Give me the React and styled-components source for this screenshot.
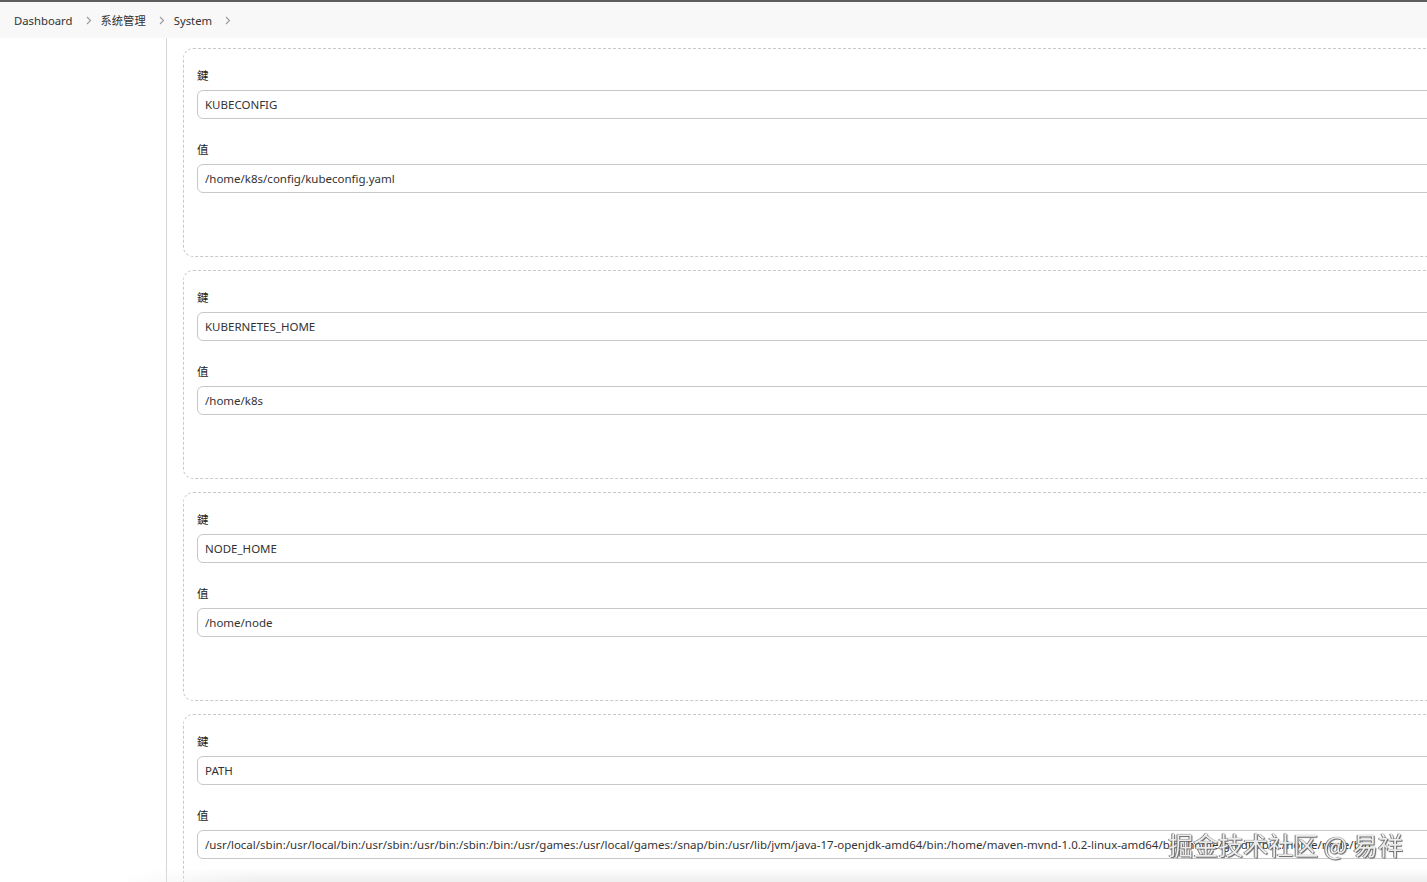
import React from 'react';
import styled, { createGlobalStyle } from 'styled-components';

const envVars = [
  { key: 'KUBECONFIG', value: '/home/k8s/config/kubeconfig.yaml' },
  { key: 'KUBERNETES_HOME', value: '/home/k8s' },
  { key: 'NODE_HOME', value: '/home/node' },
  {
    key: 'PATH',
    value:
      '/usr/local/sbin:/usr/local/bin:/usr/sbin:/usr/bin:/sbin:/bin:/usr/games:/usr/local/games:/snap/bin:/usr/lib/jvm/java-17-openjdk-amd64/bin:/home/maven-mvnd-1.0.2-linux-amd64/bin:/home/gradle/bin:/home/node/bin',
  },
];

const crumbs = ['Dashboard', '系统管理', 'System'];

const Chevron = () => (
  <svg width="6" height="9" viewBox="0 0 6 9" fill="none">
    <path d="M1 1l3.5 3.5L1 8" stroke="#9a9a9a" strokeWidth="1.1" />
  </svg>
);

const App = () => {
  return (
    <>
      <GlobalStyle />
      <TopStrip />
      <Breadcrumbs>
        {crumbs.map(c => (
          <Crumb key={c}>
            <CrumbLink>{c}</CrumbLink>
            <Chevron />
          </Crumb>
        ))}
      </Breadcrumbs>
      <Layout>
        <Sidebar />
        <Main>
          {envVars.map(v => (
            <Card key={v.key}>
              <Field>
                <Label>鍵</Label>
                <Input readOnly value={v.key} />
              </Field>
              <Field>
                <Label>值</Label>
                <Input readOnly value={v.value} />
              </Field>
            </Card>
          ))}
        </Main>
      </Layout>
      <BottomShade />
      <Watermark>掘金技术社区 @ 易祥</Watermark>
    </>
  );
};

export default App;

const GlobalStyle = createGlobalStyle`
  html, body {
    margin: 0;
    height: 100%;
    overflow: hidden;
    background: #ffffff;
  }
  body {
    font-family: "Noto Sans", "Noto Sans CJK SC", sans-serif;
    font-size: 12px;
    color: #333;
  }
`;

const TopStrip = styled.div`
  height: 2px;
  background: #5d5d5d;
`;

const Breadcrumbs = styled.nav`
  display: flex;
  align-items: center;
  height: 36px;
  padding-left: 14px;
  background: #f8f8f9;
`;

const Crumb = styled.div`
  display: flex;
  align-items: center;
  gap: 13px;
  margin-right: 9px;
`;

const CrumbLink = styled.span`
  font-size: 11.3px;
  color: #333;
`;

const Layout = styled.div`
  display: flex;
  height: calc(100vh - 38px);
`;

const Sidebar = styled.aside`
  flex: 0 0 166px;
  border-right: 1px solid #d6d6d6;
`;

const Main = styled.main`
  display: flex;
  flex-direction: column;
  gap: 13px;
  padding: 10px 0 0 16px;
`;

const Card = styled.section`
  width: 1320px;
  padding: 19px 0 63px 13px;
  border: 1px dashed #c9c9c9;
  border-radius: 10px;
  display: flex;
  flex-direction: column;
  gap: 23px;
`;

const Field = styled.div`
  display: flex;
  flex-direction: column;
  gap: 6px;
`;

const Label = styled.label`
  font-size: 11.5px;
  line-height: 16px;
  color: #222;
`;

const Input = styled.input`
  box-sizing: border-box;
  height: 29px;
  width: 100%;
  padding: 0 7px;
  border: 1px solid #c8c8c8;
  border-radius: 6px;
  font-family: "Noto Sans", "Noto Sans CJK SC", sans-serif;
  font-size: 11.5px;
  color: #333;
  background: #fff;
  outline: none;
`;

const BottomShade = styled.div`
  position: fixed;
  left: 0;
  right: 0;
  bottom: 0;
  height: 14px;
  background: linear-gradient(to bottom, rgba(240, 240, 240, 0), rgba(236, 236, 236, 0.9));
  -webkit-mask-image: linear-gradient(to right, transparent 120px, #000 260px);
  mask-image: linear-gradient(to right, transparent 120px, #000 260px);
  pointer-events: none;
`;

const Watermark = styled.div`
  position: fixed;
  right: 24px;
  bottom: 24px;
  font-family: "Noto Sans CJK SC", sans-serif;
  font-size: 25px;
  line-height: 28px;
  color: rgba(255, 255, 255, 0.9);
  text-shadow: 0 0 1px #444, 1px 1px 1px #666, -1px 0 0 #888;
  pointer-events: none;
`;
